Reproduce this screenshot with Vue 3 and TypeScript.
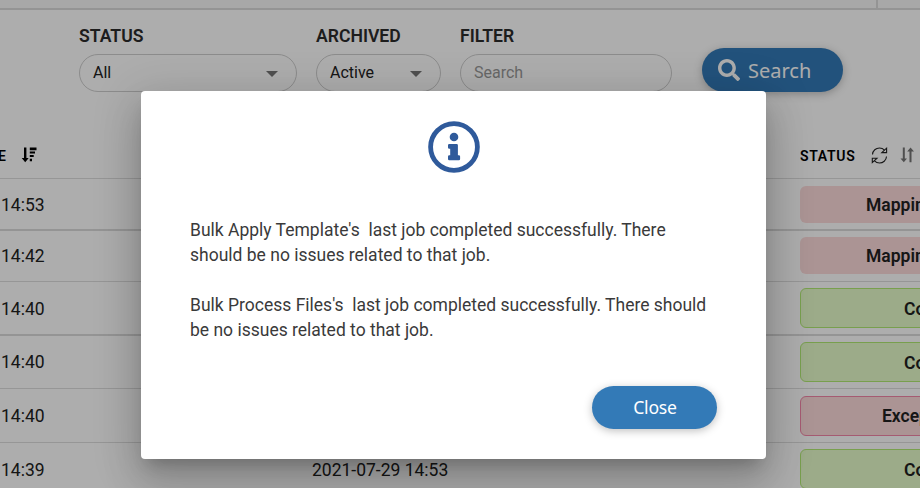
<script setup lang="ts">
type Tone = 'pink' | 'green' | 'rose'

interface Row {
  time: string
  updated: string
  label: string
  tone: Tone
  size: string
}

const rows: Row[] = [
  { time: '14:53', updated: '', label: 'Mapping', tone: 'pink', size: 'r1' },
  { time: '14:42', updated: '', label: 'Mapping', tone: 'pink', size: 'r2' },
  { time: '14:40', updated: '', label: 'Complete', tone: 'green', size: 'r3' },
  { time: '14:40', updated: '', label: 'Complete', tone: 'green', size: 'r4' },
  { time: '14:40', updated: '', label: 'Exception', tone: 'rose', size: 'r5' },
  { time: '14:39', updated: '2021-07-29 14:53', label: 'Complete', tone: 'green', size: 'r6' },
]
</script>

<template>
  <div class="page">
    <div class="topbar"><div class="topbar-end"></div></div>

    <div class="filters">
      <div class="field status">
        <label>STATUS</label>
        <div class="control"><span>All</span><i class="caret"></i></div>
      </div>
      <div class="field archived">
        <label>ARCHIVED</label>
        <div class="control"><span>Active</span><i class="caret"></i></div>
      </div>
      <div class="field filter">
        <label>FILTER</label>
        <div class="control"><span class="placeholder">Search</span></div>
      </div>
      <button class="btn search">
        <svg width="22" height="22" viewBox="0 0 512 512"><path fill="currentColor" d="M505 442.7L405.3 343c-4.500-4.500-10.600-7-17-7H372c27.600-35.300 44-79.700 44-128C416 93.100 322.900 0 208 0S0 93.100 0 208s93.100 208 208 208c48.300 0 92.700-16.400 128-44v16.300c0 6.400 2.500 12.500 7 17l99.700 99.700c9.400 9.400 24.600 9.400 33.900 0l28.300-28.300c9.400-9.400 9.400-24.600.1-34zM208 336c-70.700 0-128-57.200-128-128 0-70.700 57.200-128 128-128 70.700 0 128 57.200 128 128 0 70.700-57.200 128-128 128z" /></svg>
        <span>Search</span>
      </button>
    </div>

    <div class="thead">
      <div class="th first">
        <span>E</span>
        <svg width="16" height="16" viewBox="0 0 16 16" fill="#000">
          <path d="M3 0.500h2.400v10.500H7.700L4.200 15.300 0.700 11H3z" />
          <path d="M8.800 0.500H15.500V3.200H8.800zM8.800 4.500H14V6.500H8.800zM8.800 8H12.700V10H8.800zM8.800 11.700H11V14.300H8.800z" />
        </svg>
      </div>
      <div class="th last">
        <span>STATUS</span>
        <svg class="sync" width="17" height="17" viewBox="0 0 17 17" fill="none" stroke="#222" stroke-width="1.100">
          <path d="M1.500 7.500C1.700 3.500 5 1 8.500 1c2 0 3.700.8 5 2.200" />
          <path d="M15.500 9.500C15.300 13.500 12 16 8.500 16c-2 0-3.700-.8-5-2.200" />
          <path d="M15.600 1.200V5.600H10.800zM1.300 15.600V11.200H6z" />
        </svg>
        <svg class="sort" width="14" height="16" viewBox="0 0 14 16" fill="#757575">
          <path d="M2.800 0.500h2v11H7L3.800 15.300 0.500 11.500H2.800zM9.500 15.300h2V4.500H14L10.500 0.500 7.200 4.500H9.500z" />
        </svg>
      </div>
    </div>

    <div v-for="(row, i) in rows" :key="i" class="row" :class="row.size">
      <div class="time">{{ row.time }}</div>
      <div class="updated">{{ row.updated }}</div>
      <div class="badge" :class="row.tone">{{ row.label }}</div>
    </div>

    <div class="backdrop">
      <div class="dialog" role="dialog">
        <svg class="info" width="52" height="52" viewBox="0 0 52 52">
          <circle cx="26" cy="26" r="23.400" fill="none" stroke="#2f5a9b" stroke-width="4.800" />
          <circle cx="26" cy="16" r="4.300" fill="#2f5a9b" />
          <path fill="#2f5a9b" d="M21.300 23h7.300q1.300 0 1.300 1.300V34.200h.9q1.300 0 1.300 1.300v2.400q0 1.300-1.300 1.300H21.300q-1.300 0-1.300-1.300v-2.400q0-1.300 1.300-1.300h.9V27.700h-.9q-1.300 0-1.300-1.300v-2.100q0-1.300 1.300-1.300z" />
        </svg>
        <div class="message">
          <p>Bulk Apply Template's&nbsp; last job completed successfully. There should be no issues related to that job.</p>
          <p>Bulk Process Files's&nbsp; last job completed successfully. There should be no issues related to that job.</p>
        </div>
        <button class="btn close">Close</button>
      </div>
    </div>
  </div>
</template>

<style>
body { margin: 0; overflow: hidden; }
</style>

<style scoped>
* { box-sizing: border-box; }
.page {
  position: relative;
  width: 920px;
  height: 488px;
  overflow: hidden;
  background: #fff;
  color: #212121;
  font-family: Roboto, sans-serif;
}
.topbar {
  display: flex;
  justify-content: flex-end;
  height: 10px;
  background: #f8f8f8;
  border-bottom: 2px solid #dadada;
}
.topbar-end { width: 44px; border-left: 2px solid #dadada; }
.filters {
  display: flex;
  align-items: flex-start;
  height: 108px;
  padding: 15px 0 0 79px;
}
.field { margin-right: 19px; }
.field.status { width: 218px; }
.field.archived { width: 125px; }
.field.filter { width: 212px; margin-right: 30px; }
.field label {
  display: block;
  height: 29px;
  line-height: 22px;
  font-size: 17.600px;
  font-weight: 600;
  color: #2b2b2b;
}
.control {
  display: flex;
  align-items: center;
  justify-content: space-between;
  height: 38px;
  padding: 0 18px 2px 13px;
  border: 1px solid #cecece;
  border-radius: 19px;
  font-size: 16px;
}
.placeholder { color: #999; }
.caret {
  border: 6px solid transparent;
  border-top-color: #757575;
  border-bottom: 0;
  margin-top: 3px;
}
.btn {
  display: flex;
  align-items: center;
  border: 0;
  padding: 0;
  color: #fff;
  background: #337ab7;
  border-radius: 22px;
  font-family: "Noto Sans", sans-serif;
  box-shadow: 0 2px 8px rgba(0, 0, 0, .25);
}
.search {
  width: 141px;
  height: 44px;
  margin-top: 23px;
  padding-left: 16px;
  gap: 8px;
  font-size: 20px;
}
.thead {
  display: flex;
  justify-content: space-between;
  height: 61px;
  padding-top: 14px;
  border-bottom: 1px solid #dedede;
}
.th {
  display: flex;
  align-items: center;
  height: 46px;
  font-size: 14px;
  font-weight: 600;
  color: #000;
}
.th span { padding-top: 2px; }
.first { gap: 15px; margin-left: -2px; }
.last { width: 120px; }
.last span { width: 56px; letter-spacing: .7px; }
.sync { margin-left: 15px; }
.sort { margin-left: 12px; }
.row {
  display: grid;
  grid-template-columns: 311px 489px 200px;
  align-items: start;
  border-bottom: 1px solid #dedede;
  font-size: 17.500px;
  line-height: 22px;
}
.time { padding-left: 1px; }
.updated { padding-left: 1px; }
.time, .updated { align-self: start; padding-top: 15px; }
.badge {
  height: 40px;
  line-height: 38px;
  border: 1px solid transparent;
  border-radius: 6px;
  font-weight: 600;
  color: #212121;
  white-space: nowrap;
  margin-top: 6px;
}
.pink { height: 37px; line-height: 36px; padding-left: 65px; background: #fcdada; margin-top: 7px; }
.green { padding-left: 103px; line-height: 40px; background: #e6fccb; border-color: #b2ea74; }
.rose { padding-left: 81px; background: #fcdada; border-color: #f387a8; }
.r1 { height: 52px; border-bottom: 2px solid #dadada; }
.r2 { height: 51px; }
.r2 .time { padding-top: 14px; }
.r2 .badge { margin-top: 6px; }
.r3 { height: 54px; border-bottom: 2px solid #dadada; }
.r3 .time, .r4 .time, .r5 .time, .r6 .time, .r6 .updated { padding-top: 16px; }
.r4 { height: 53px; }
.r4 .time { padding-top: 15px; }
.r5 { height: 54px; }
.r5 .badge { margin-top: 7px; }
.r6 { height: 54px; }
.backdrop {
  position: absolute;
  inset: 0;
  display: flex;
  justify-content: center;
  align-items: flex-start;
  padding: 91px 13px 0 0;
  background: rgba(0, 0, 0, .32);
}
.dialog {
  display: flex;
  flex-direction: column;
  width: 625px;
  height: 368px;
  padding: 30px 49px;
  background: #fff;
  border-radius: 4px;
  box-shadow: 0 11px 15px -7px rgba(0, 0, 0, .2), 0 24px 38px 3px rgba(0, 0, 0, .14), 0 9px 46px 8px rgba(0, 0, 0, .12);
}
.info { align-self: center; }
.message {
  margin-top: 45px;
  font-size: 17.500px;
  line-height: 25px;
  color: #3a3a3a;
}
.message p { margin: 0 0 25px; }
.close {
  justify-content: center;
  align-self: flex-end;
  flex: none;
  width: 125px;
  height: 43px;
  margin-top: 18px;
  padding: 0 0 2px 1px;
  font-size: 17.600px;
  letter-spacing: -.2px;
}
</style>
